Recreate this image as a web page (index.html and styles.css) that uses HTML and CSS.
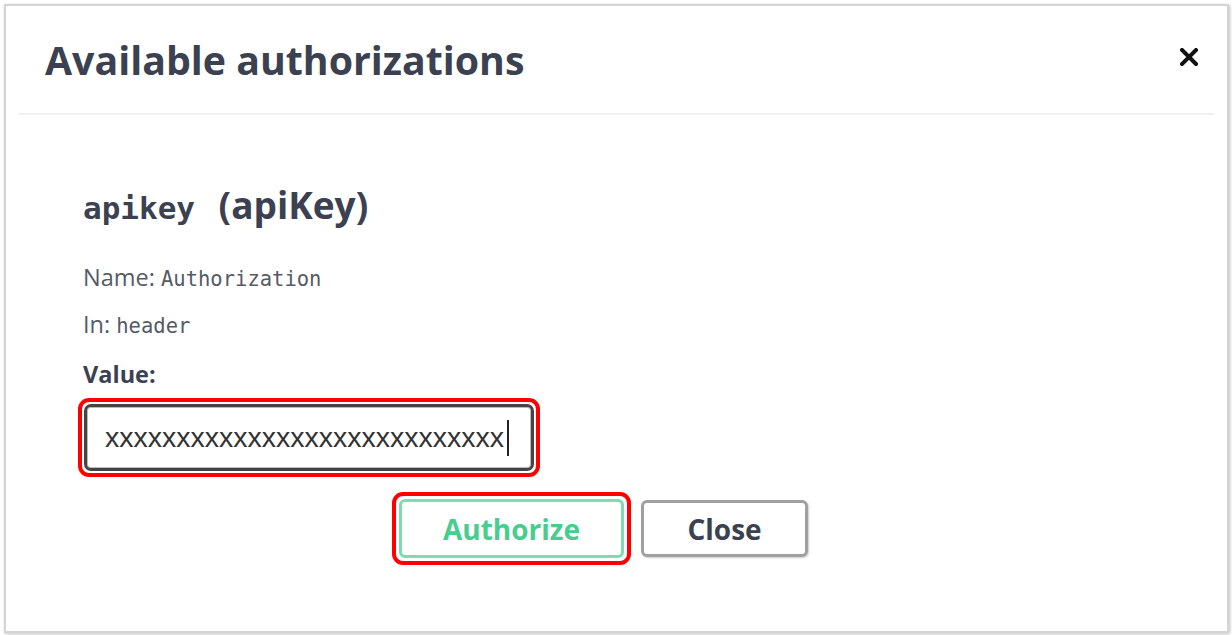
FILE: index.html
```html
<!DOCTYPE html>
<html lang="en">
<head>
  <meta charset="UTF-8">
  <title>Available authorizations</title>
  <link rel="stylesheet" href="styles.css">
</head>
<body>
  <div class="modal">
    <div class="modal-header">
      <h3 class="modal-title">Available authorizations</h3>
      <button class="close-modal" aria-label="Close">
        <svg width="18" height="18" viewBox="0 0 18 18"><path d="M2 2 L16 16 M16 2 L2 16" stroke="#111" stroke-width="4" stroke-linecap="square"/></svg>
      </button>
    </div>

    <div class="modal-body">
      <h4 class="scheme-title"><code>apikey</code> (apiKey)</h4>
      <p class="scheme-row">Name: <code>Authorization</code></p>
      <p class="scheme-row">In: <code>header</code></p>
      <label class="value-label" for="api-value">Value:</label>

      <div class="highlight input-highlight">
        <input id="api-value" class="value-input" type="text" value="xxxxxxxxxxxxxxxxxxxxxxxxxxxx">
        <span class="caret"></span>
      </div>

      <div class="auth-btn-wrapper">
        <div class="highlight btn-highlight">
          <button class="btn authorize">Authorize</button>
        </div>
        <button class="btn btn-done">Close</button>
      </div>
    </div>
  </div>
</body>
</html>
```

FILE: styles.css
```css
body, html {
  margin: 0;
  height: 100%;
  background: #fff;
  font-family: "Open Sans", sans-serif;
  color: #3b4151;
}

.modal {
  box-sizing: border-box;
  margin: 4px 3px 0 4px;
  height: 629px;
  border: 2px solid #d4d4d4;
  box-shadow: 1px 1px 3px rgba(0, 0, 0, 0.25);
  background: #fff;
}

.modal-header {
  display: flex;
  align-items: center;
  justify-content: space-between;
  height: 107px;
  margin: 0 13px;
  padding: 0 16px 0 26px;
  border-bottom: 2px solid #f0f0f0;
}

.modal-title {
  margin: 0;
  font-size: 39.3px;
  font-weight: 700;
  color: #3b4151;
}

.close-modal {
  border: none;
  background: none;
  padding: 0;
  width: 18px;
  height: 18px;
  margin-top: -6px;
  cursor: pointer;
}

.modal-body {
  padding: 70px 0 0 77px;
}

.scheme-title {
  margin: 0 0 34px;
  font-size: 37px;
  font-weight: 700;
  line-height: 40px;
}

.scheme-title code {
  font-family: "DejaVu Sans Mono", monospace;
  font-size: 31px;
  font-weight: 700;
  margin-right: 14px;
}

.scheme-row {
  margin: 0 0 15px;
  font-size: 23.5px;
  line-height: 30px;
  color: #555a66;
}

.scheme-row code {
  font-family: "DejaVu Sans Mono", monospace;
  font-size: 20.5px;
}

.value-label {
  display: block;
  margin: 21px 0 12px;
  font-size: 23.5px;
  font-weight: 700;
  line-height: 24px;
}

.highlight {
  box-sizing: border-box;
  border: 4px solid #ff0000;
  border-radius: 11px;
  padding: 2px;
}

.input-highlight {
  position: relative;
  width: 462px;
  margin-left: -5px;
}

.value-input {
  box-sizing: border-box;
  width: 100%;
  height: 67px;
  padding: 0 18px;
  border: 3px solid #444;
  border-radius: 7px;
  font-family: "Liberation Sans", Arial, sans-serif;
  font-size: 28.5px;
  color: #333;
  outline: none;
  box-shadow: inset 0 0 0 1px #bbb;
}

.caret {
  position: absolute;
  left: 425px;
  top: 18px;
  width: 2px;
  height: 36px;
  background: #222;
}

.auth-btn-wrapper {
  display: flex;
  align-items: center;
  padding-left: 309px;
  gap: 10px;
  margin-top: 15px;
}

.btn-highlight {
  padding: 3px;
}

.btn {
  box-sizing: border-box;
  height: 58px;
  border-radius: 6px;
  background: #fff;
  font-family: "Open Sans", sans-serif;
  font-size: 28px;
  font-weight: 700;
  cursor: pointer;
}

.authorize {
  width: 225px;
  height: 59px;
  border: 3px solid #7fdcb0;
  color: #49cc90;
}

.btn-done {
  width: 167px;
  height: 57px;
  border: 3px solid #a0a0a0;
  color: #3b4151;
  box-shadow: 1px 1px 2px rgba(0, 0, 0, 0.2);
}
```
